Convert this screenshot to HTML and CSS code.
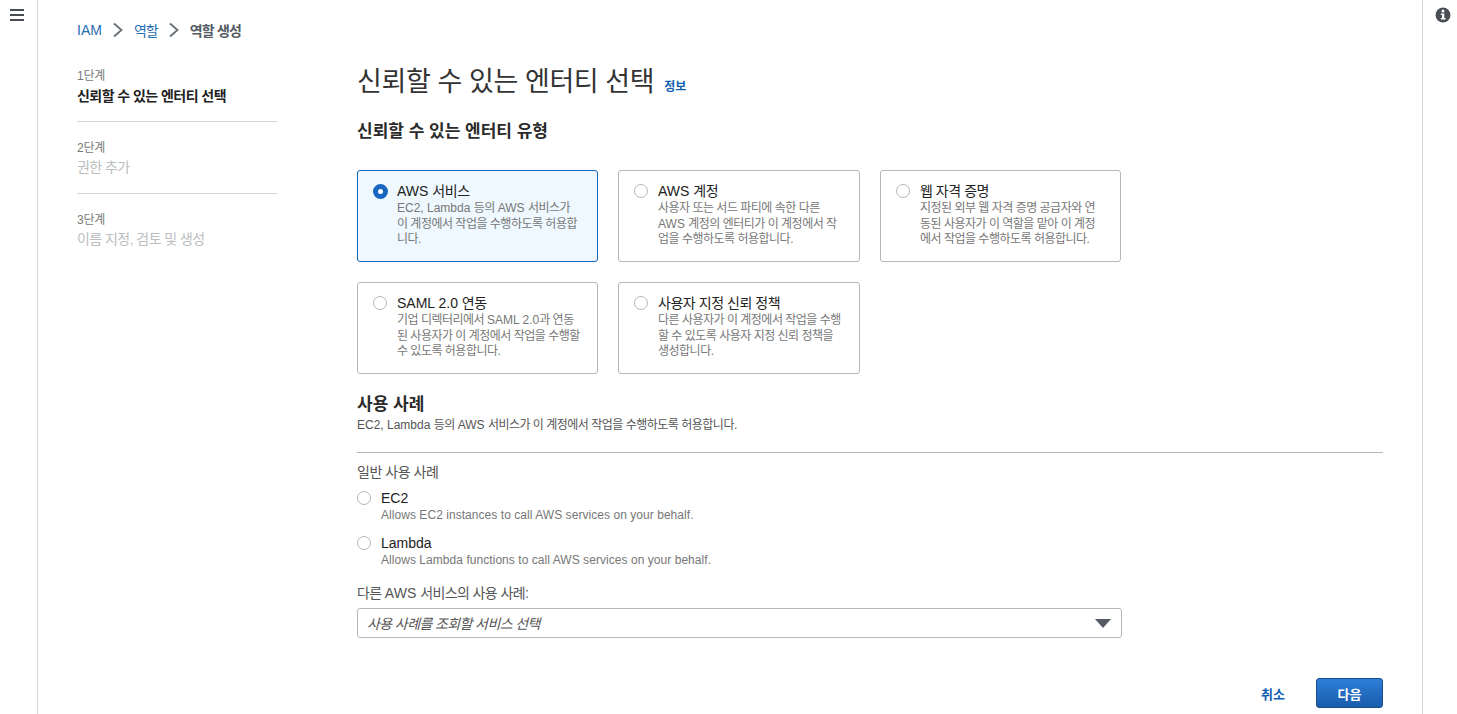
FILE: index.html
```html
<!DOCTYPE html>
<html lang="ko">
<head>
<meta charset="utf-8">
<title>역할 생성</title>
<link rel="stylesheet" href="styles.css">
</head>
<body>
<div class="shell">
  <aside class="rail rail-left">
    <svg class="menu-icon" width="14" height="12" viewBox="0 0 14 12"><path d="M0 1h14M0 6h14M0 11h14" stroke="#484d54" stroke-width="2"/></svg>
  </aside>
  <main class="main">
    <nav class="crumbs">
      <a class="link">IAM</a>
      <svg class="chev" width="10" height="16" viewBox="0 0 10 16"><path d="M1 1.500 8.500 8 1 14.500" fill="none" stroke="#687078" stroke-width="1.800"/></svg>
      <a class="link tight">역할</a>
      <svg class="chev" width="10" height="16" viewBox="0 0 10 16"><path d="M1 1.500 8.500 8 1 14.500" fill="none" stroke="#687078" stroke-width="1.800"/></svg>
      <span class="crumb-current">역할 생성</span>
    </nav>
    <div class="columns">
      <ol class="steps">
        <li class="step"><div class="step-num">1단계</div><div class="step-name active">신뢰할 수 있는 엔터티 선택</div></li>
        <li class="step"><div class="step-num">2단계</div><div class="step-name">권한 추가</div></li>
        <li class="step"><div class="step-num">3단계</div><div class="step-name">이름 지정, 검토 및 생성</div></li>
      </ol>
      <section class="content">
        <h1 class="title">신뢰할 수 있는 엔터티 선택 <a class="info">정보</a></h1>
        <h2 class="subtitle">신뢰할 수 있는 엔터티 유형</h2>
        <div class="cards">
          <div class="card selected"><span class="radio on"></span><div class="card-body"><div class="card-title"><span class="lat">AWS </span>서비스</div><div class="card-desc"><span class="lat">EC2, Lambda </span>등의 <span class="lat">AWS </span>서비스가<br>이 계정에서 작업을 수행하도록 허용합<br>니다.</div></div></div>
          <div class="card"><span class="radio"></span><div class="card-body"><div class="card-title"><span class="lat">AWS </span>계정</div><div class="card-desc">사용자 또는 서드 파티에 속한 다른<br><span class="lat">AWS </span>계정의 엔터티가 이 계정에서 작<br>업을 수행하도록 허용합니다.</div></div></div>
          <div class="card"><span class="radio"></span><div class="card-body"><div class="card-title">웹 자격 증명</div><div class="card-desc">지정된 외부 웹 자격 증명 공급자와 연<br>동된 사용자가 이 역할을 맡아 이 계정<br>에서 작업을 수행하도록 허용합니다.</div></div></div>
          <div class="card"><span class="radio"></span><div class="card-body"><div class="card-title"><span class="lat">SAML 2.0 </span>연동</div><div class="card-desc">기업 디렉터리에서 <span class="lat">SAML 2.0</span>과 연동<br>된 사용자가 이 계정에서 작업을 수행할<br>수 있도록 허용합니다.</div></div></div>
          <div class="card"><span class="radio"></span><div class="card-body"><div class="card-title">사용자 지정 신뢰 정책</div><div class="card-desc">다른 사용자가 이 계정에서 작업을 수행<br>할 수 있도록 사용자 지정 신뢰 정책을<br>생성합니다.</div></div></div>
        </div>
        <h2 class="usecase-title">사용 사례</h2>
        <p class="usecase-desc"><span class="lat">EC2, Lambda </span>등의 <span class="lat">AWS </span>서비스가 이 계정에서 작업을 수행하도록 허용합니다.</p>
        <hr class="rule">
        <div class="group-label">일반 사용 사례</div>
        <div class="option"><span class="radio"></span><div><div class="option-title">EC2</div><div class="option-desc">Allows EC2 instances to call AWS services on your behalf.</div></div></div>
        <div class="option"><span class="radio"></span><div><div class="option-title">Lambda</div><div class="option-desc">Allows Lambda functions to call AWS services on your behalf.</div></div></div>
        <div class="select-label">다른 <span class="lat">AWS </span>서비스의 사용 사례:</div>
        <div class="select"><span class="placeholder">사용 사례를 조회할 서비스 선택</span><svg width="16" height="9" viewBox="0 0 16 9"><path d="M0 0h16L8 9z" fill="#545b64"/></svg></div>
        <div class="actions"><a class="cancel">취소</a><button class="next">다음</button></div>
      </section>
    </div>
  </main>
  <aside class="rail rail-right">
    <svg class="info-icon" width="16" height="16" viewBox="0 0 16 16"><circle cx="8" cy="8" r="7.500" fill="#4a4f56"/><circle cx="8" cy="4" r="1.500" fill="#fff"/><path d="M5.800 6.500H9.300V11H10.500V12.500H5.800V11H7V8H5.800z" fill="#fff"/></svg>
  </aside>
</div>
</body>
</html>
```
FILE: styles.css
```css
* { box-sizing: border-box; }
html, body { margin: 0; height: 100%; overflow: hidden; }
body {
  font-family: "Liberation Sans", "Noto Sans CJK KR", sans-serif;
  font-size: 14px;
  color: #222;
  background: #fff;
}
.shell { display: flex; height: 714px; }
.rail { flex: none; display: flex; }
.rail-left { width: 38px; border-right: 1px solid #d5d8d8; padding: 9px 0 0 10px; }
.rail-right { width: 35px; border-left: 1px solid #d5d8d8; padding: 7px 0 0 12px; }
.menu-icon, .info-icon { display: block; }
.main { flex: 1; min-width: 0; padding: 0 39px; }
.crumbs { display: flex; align-items: center; height: 60px; font-size: 14px; padding-bottom: 1px; }
.link { color: #1f6db2; }
.tight { letter-spacing: -1px; }
.chev { margin: 0 11px; }
.crumb-current { color: #545b64; font-weight: 700; letter-spacing: -0.8px; }
.columns { display: flex; gap: 80px; }
.steps { list-style: none; margin: 0; padding: 0; width: 200px; flex: none; }
.step { height: 72px; border-bottom: 1px solid #d5d8d8; padding-top: 18px; }
.step:first-child { height: 62px; padding-top: 8px; }
.step:last-child { border-bottom: 0; }
.step-num { font-size: 12px; line-height: 16px; color: #777; letter-spacing: -0.2px; }
.step-name { font-size: 14px; line-height: 20px; margin-top: 1px; color: #bbbdbe; letter-spacing: -0.55px; }
.step-name.active { color: #222; font-weight: 700; margin-top: 2px; }
.content { flex: 1; min-width: 0; }
.title { margin: 1px 0 0; font-size: 27px; font-weight: 400; line-height: 42px; color: #333; letter-spacing: -0.4px; }
.info { font-size: 12px; font-weight: 700; color: #0f5fb0; margin-left: 3px; letter-spacing: -0.1px; }
.subtitle { margin: 11px 0 0; font-size: 17px; font-weight: 700; line-height: 26px; color: #2b2b2b; }
.cards { display: grid; grid-template-columns: 241px 242px 241px; grid-auto-rows: 92px; gap: 20px; margin-top: 25px; }
.card { display: flex; gap: 9px; border: 1px solid #b4b8b8; border-radius: 3px; padding: 12px 15px; }
.card.selected { background: #eef8fe; border-color: #1166bb; }
.radio { flex: none; width: 14px; height: 14px; margin-top: 1px; border: 1px solid #b4b8b8; border-radius: 50%; background: #fff; margin-right: 1px; }
.radio.on { width: 15px; height: 15px; border: 5px solid #1766c0; margin-right: 0; }
.lat { letter-spacing: 0; }
.card-title { font-size: 14px; line-height: 16px; letter-spacing: -0.45px; white-space: nowrap; }
.card-desc { margin-top: 2px; font-size: 12px; line-height: 15.500px; color: #777; letter-spacing: -0.5px; white-space: nowrap; }
.usecase-title { margin: 20px 0 0; font-size: 17px; font-weight: 700; line-height: 22px; color: #2b2b2b; }
.usecase-desc { margin: 0; font-size: 12px; line-height: 18px; color: #555; letter-spacing: -0.5px; }
.rule { margin: 18px 0 0; border: 0; border-top: 1px solid #b4b8b8; }
.group-label { margin-top: 10px; font-size: 14px; line-height: 18px; color: #555; letter-spacing: -0.45px; }
.option { display: flex; gap: 9px; margin-top: 8px; }
.option .radio { margin-top: 2px; }
.option + .option { margin-top: 11px; }
.option-title { font-size: 14px; line-height: 18px; }
.option-desc { font-size: 12px; line-height: 16px; color: #777; letter-spacing: 0.05px; }
.select-label { margin-top: 16px; font-size: 14px; line-height: 18px; color: #555; letter-spacing: -0.6px; }
.select { display: flex; align-items: center; justify-content: space-between; width: 765px; height: 30px; margin-top: 6px; padding: 0 10px 0 9px; border: 1px solid #b4b8b8; border-radius: 3px; }
.placeholder { font-size: 14px; font-style: italic; color: #555; letter-spacing: -0.6px; }
.actions { display: flex; justify-content: flex-end; align-items: center; gap: 31px; margin-top: 40px; }
.cancel { font-size: 13px; font-weight: 700; color: #0f5fb0; }
.next { width: 67px; height: 30px; border: 1px solid #174f8e; border-radius: 3px; background: linear-gradient(#2d7ed8, #1a5cab); color: #fff; font: 700 13px "Liberation Sans", "Noto Sans CJK KR", sans-serif; }
```
